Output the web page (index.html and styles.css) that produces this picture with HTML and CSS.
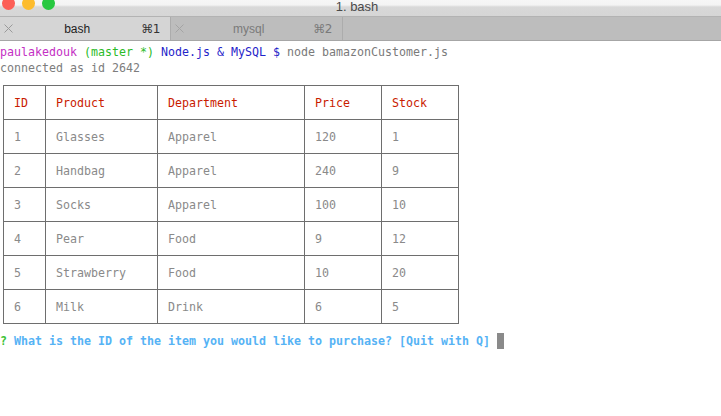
FILE: index.html
```html
<!DOCTYPE html>
<html>
<head>
<meta charset="utf-8">
<link rel="stylesheet" href="styles.css">
</head>
<body>
<div class="window">
  <header class="titlebar">
    <div class="lights">
      <span class="light red"></span>
      <span class="light yellow"></span>
      <span class="light green"></span>
    </div>
    <div class="title">1. bash</div>
  </header>
  <nav class="tabbar">
    <div class="tab active">
      <svg class="close" width="9" height="9" viewBox="0 0 9 9"><path d="M0.5 0.5 L8.5 8.5 M8.5 0.5 L0.5 8.5" stroke="#9a9a9a" stroke-width="1" fill="none"/></svg>
      <span class="tab-label">bash</span>
      <span class="tab-key">⌘1</span>
    </div>
    <div class="tab">
      <svg class="close" width="9" height="9" viewBox="0 0 9 9"><path d="M0.5 0.5 L8.5 8.5 M8.5 0.5 L0.5 8.5" stroke="#a4a4a4" stroke-width="1" fill="none"/></svg>
      <span class="tab-label">mysql</span>
      <span class="tab-key">⌘2</span>
    </div>
    <div class="tab-fill"></div>
  </nav>
  <main class="terminal">
    <div class="line"><span class="c-mag">paulakedouk</span> <span class="c-green">(master *)</span> <span class="c-blue">Node.js &amp; MySQL $</span> <span class="c-cmd">node bamazonCustomer.js</span></div>
    <div class="line c-out">connected as id 2642</div>
    <table class="grid">
      <thead>
        <tr><th class="w-id">ID</th><th class="w-prod">Product</th><th class="w-dept">Department</th><th class="w-price">Price</th><th class="w-stock">Stock</th></tr>
      </thead>
      <tbody>
        <tr><td>1</td><td>Glasses</td><td>Apparel</td><td>120</td><td>1</td></tr>
        <tr><td>2</td><td>Handbag</td><td>Apparel</td><td>240</td><td>9</td></tr>
        <tr><td>3</td><td>Socks</td><td>Apparel</td><td>100</td><td>10</td></tr>
        <tr><td>4</td><td>Pear</td><td>Food</td><td>9</td><td>12</td></tr>
        <tr><td>5</td><td>Strawberry</td><td>Food</td><td>10</td><td>20</td></tr>
        <tr><td>6</td><td>Milk</td><td>Drink</td><td>6</td><td>5</td></tr>
      </tbody>
    </table>
    <div class="line prompt"><span class="q">?</span> What is the ID of the item you would like to purchase? [Quit with Q] <span class="cursor"></span></div>
  </main>
</div>
</body>
</html>
```
FILE: styles.css
```css
html, body {
  margin: 0;
  padding: 0;
  background: #ffffff;
}
.window {
  width: 721px;
  height: 416px;
  overflow: hidden;
  background: #ffffff;
}
.titlebar {
  height: 16px;
  position: relative;
  background: linear-gradient(#f6f6f6 0, #f3f3f3 5px, #d8d8d8 7px, #d6d6d6 16px);
  display: flex;
  align-items: flex-start;
}
.lights {
  display: flex;
  gap: 7px;
  padding-left: 2px;
  margin-top: -3px;
}
.light {
  width: 13px;
  height: 13px;
  border-radius: 50%;
  display: block;
}
.red { background: #fc5f57; }
.yellow { background: #fdbc2e; }
.green { background: #28c840; }
.title {
  flex: 1;
  text-align: center;
  font-family: "Liberation Sans", Arial, sans-serif;
  font-size: 13px;
  line-height: 13px;
  padding-top: 0;
  color: #4a4a4a;
  margin-right: 62px;
}
.tabbar {
  display: flex;
  height: 23px;
  border-top: 1px solid #b3b3b3;
  border-bottom: 1px solid #a6a6a6;
  background: #bdbdbd;
  font-family: "Liberation Sans", Arial, sans-serif;
  font-size: 12px;
}
.tab {
  width: 172px;
  box-sizing: border-box;
  display: flex;
  align-items: center;
  padding: 0 10px 0 4px;
  border-right: 1px solid #acacac;
  color: #7a7a7a;
}
.tab.active {
  width: 171px;
  background: #d5d5d5;
  color: #1e1e1e;
}
.close {
  display: block;
  flex: none;
}
.tab-label {
  flex: 1;
  text-align: center;
}
.tab-key {
  font-family: "DejaVu Sans", sans-serif;
  font-size: 12px;
  letter-spacing: -0.5px;
}
.tab.active .tab-key { color: #333; }
.tab-fill { flex: 1; }
.terminal {
  padding-top: 3px;
  font-family: "DejaVu Sans Mono", monospace;
  font-size: 11.63px;
  line-height: 16px;
  color: #808080;
}
.line {
  white-space: pre;
  height: 16px;
}
.c-mag { color: #c430c4; }
.c-green { color: #2bbb28; }
.c-blue { color: #1f24c9; }
.c-cmd { color: #7a7a7a; }
.c-out { color: #7d7d7d; }
.grid {
  margin: 9px 0 9px 3px;
  border-collapse: separate;
  border-spacing: 0;
  table-layout: fixed;
  width: 456px;
  border-left: 1px solid #6e6e6e;
  border-top: 1px solid #6e6e6e;
}
.grid th, .grid td {
  box-sizing: border-box;
  height: 34px;
  padding: 0 0 0 10px;
  border-right: 1px solid #6e6e6e;
  border-bottom: 1px solid #6e6e6e;
  text-align: left;
  vertical-align: middle;
  font-weight: normal;
  white-space: nowrap;
}
.grid th { color: #c91b00; }
.grid td { color: #8a8a8a; }
.w-id { width: 42px; }
.w-prod { width: 112px; }
.w-dept { width: 147px; }
.w-price { width: 77px; }
.w-stock { width: 77px; }
.prompt {
  font-weight: bold;
  color: #56b3f5;
}
.q { color: #3cc236; }
.cursor {
  display: inline-block;
  width: 7px;
  height: 16px;
  background: #8a8a8a;
  vertical-align: top;
}
```
